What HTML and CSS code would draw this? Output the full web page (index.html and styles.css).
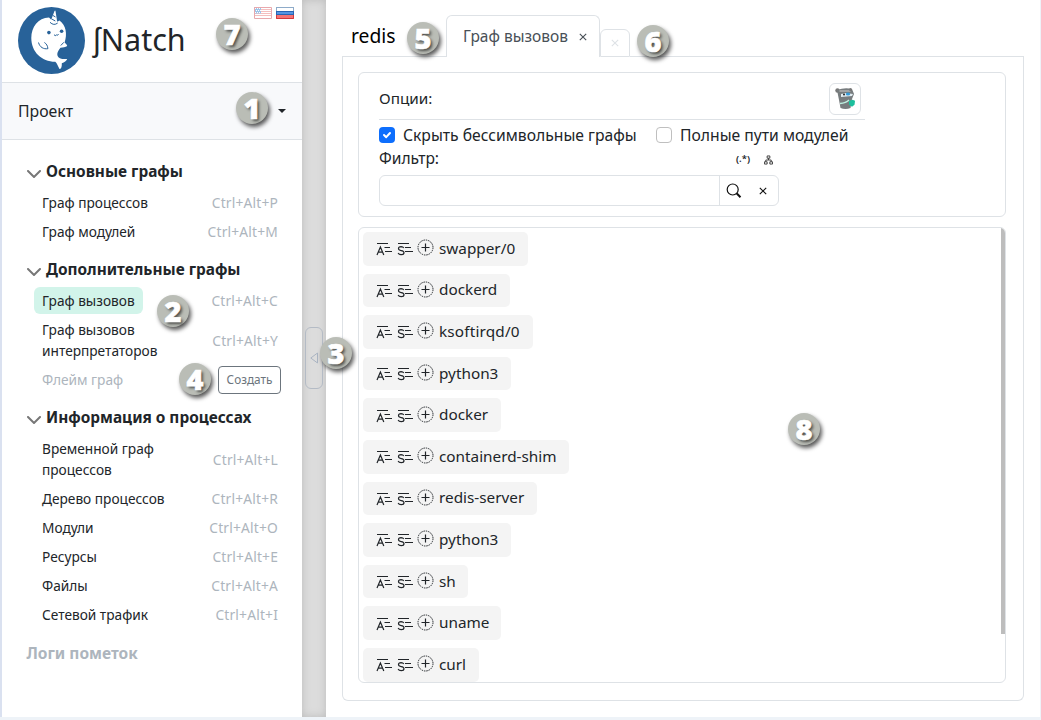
FILE: index.html
```html
<!DOCTYPE html>
<html lang="ru">
<head>
<meta charset="utf-8">
<title>Natch</title>
<link rel="stylesheet" href="styles.css">
</head>
<body>
<svg class="defs" width="0" height="0">
  <symbol id="chev" viewBox="0 0 14 8"><path d="M1 1l6 6 6-6" fill="none" stroke="#777" stroke-width="2" stroke-linecap="round"/></symbol>
  <symbol id="asm" viewBox="0 0 16 14"><path d="M1 1.500h11M8.500 5.500h5.500M9 9.500h7M1 13l3.400-8L7.800 13M2.200 10.200h4.400" fill="none" stroke="#212529" stroke-width="1.200"/></symbol>
  <symbol id="src" viewBox="0 0 16 14"><path d="M1 1.500h11M8 5.500h6M8 9.500h8M6.800 6Q6 4.600 4.100 4.600 1.500 4.700 1.500 6.500 1.500 8.200 4.200 8.600 7 9 7 10.800 7 12.700 4.200 12.700 1.900 12.700 1.100 11" fill="none" stroke="#212529" stroke-width="1.200"/></symbol>
  <symbol id="plus" viewBox="0 0 17 17"><circle cx="8.500" cy="8.500" r="7.500" fill="none" stroke="#212529" stroke-width="1" stroke-dasharray="1.500 .86"/><path d="M8.500 4.500v8M4.500 8.500h8" stroke="#212529" stroke-width="1.200"/></symbol>
</svg>
<div class="app">
  <aside class="sidebar">
    <header class="brand">
      <svg class="logo" viewBox="0 0 67 67">
        <circle cx="33.500" cy="33.500" r="33.500" fill="#286299"/>
        <path d="M32 16L36.500 4q.6-1 1 0L39.500 17q-3.500 2.500-7.500-1z" fill="#fff"/>
        <path d="M31 10.500C20 11 13.300 20 13.300 31c0 14 10.200 23.500 24 23.800 1.700 1.400 2.500 4.200 4.200 7.200 1.700.4 2.500-2.300 2.300-5.700 2.500-1 4.800-2.500 5.400-4.300-3.200.1-6.200.5-8.500-1.500-2.300-2.400-1.700-5.700 1.800-9.800 2.500-.3 5-.6 6.700-1.700-.4-1.500-1.700-2.500-2.600-3.400C49.500 27 48 18 41.500 13.500q-5 3.500-10.500-3z" fill="#fff"/>
        <circle cx="30.900" cy="25.600" r="1.800" fill="#286299"/><circle cx="43.600" cy="24.200" r="1.800" fill="#286299"/>
        <path d="M36 27.700q1.200 1.800 2.500.2 1.500.9 2-.7M20.500 35.500c1.300 4.800 5 6.800 9.400 6.200-.2-2.900-1.500-5-3.500-6.200M42.800 38.500l3-3.200M32 15.300q3.800 3.800 7.700.7M35 8.500l2.500 1.500M33.800 12l3.500 2" fill="none" stroke="#286299" stroke-width="1"/>
      </svg>
      <span class="brand-name">ʃNatch</span>
      <span class="flags">
        <svg class="flag us" viewBox="0 0 18 12"><path fill="#fff" d="M0 0h18v12H0z"/><path d="M0 2.500h18M0 4.500h18M0 6.500h18M0 8.500h18" stroke="#f3b5b5"/><path fill="#8fbce6" d="M0 0h7v6.500H0z"/><path d="M1 1.500h6M2 3.500h6M1 5.500h6" stroke="#fff" stroke-dasharray="1 1"/><path fill="none" stroke="#e59a9f" d="M.5.5h17v11H.5z"/></svg>
        <svg class="flag" viewBox="0 0 18 12"><path fill="#fff" d="M0 0h18v4H0z"/><path fill="#5495e2" d="M0 4h18v4H0z"/><path fill="#f47373" d="M0 8h18v4H0z"/><path d="M.5 0v4M17.500 0v4M0 .5h18" stroke="#8eabc9"/><path d="M0 4.500h18M0 7.500h18M.5 4v4M17.500 4v4" stroke="#2865b5"/><path d="M.5 8v3.500h17V8" fill="none" stroke="#d3393d"/></svg>
      </span>
    </header>
    <div class="project"><span>Проект</span><i class="caret"></i></div>
    <nav class="menu">
      <h2><svg class="chev"><use href="#chev"/></svg><span>Основные графы</span></h2>
      <div class="item"><a>Граф процессов</a><kbd>Ctrl+Alt+P</kbd></div>
      <div class="item"><a>Граф модулей</a><kbd>Ctrl+Alt+M</kbd></div>
      <h2><svg class="chev"><use href="#chev"/></svg><span>Дополнительные графы</span></h2>
      <div class="item"><a class="active">Граф вызовов</a><kbd>Ctrl+Alt+C</kbd></div>
      <div class="item"><a>Граф вызовов<br>интерпретаторов</a><kbd>Ctrl+Alt+Y</kbd></div>
      <div class="item off"><a>Флейм граф</a><button class="create">Создать</button></div>
      <h2><svg class="chev"><use href="#chev"/></svg><span>Информация о процессах</span></h2>
      <div class="item"><a>Временной граф<br>процессов</a><kbd>Ctrl+Alt+L</kbd></div>
      <div class="item"><a>Дерево процессов</a><kbd>Ctrl+Alt+R</kbd></div>
      <div class="item"><a>Модули</a><kbd>Ctrl+Alt+O</kbd></div>
      <div class="item"><a>Ресурсы</a><kbd>Ctrl+Alt+E</kbd></div>
      <div class="item"><a>Файлы</a><kbd>Ctrl+Alt+A</kbd></div>
      <div class="item"><a>Сетевой трафик</a><kbd>Ctrl+Alt+I</kbd></div>
      <h2 class="off"><span>Логи пометок</span></h2>
    </nav>
  </aside>
  <div class="splitter"><button class="collapse"><svg width="9" height="12" viewBox="0 0 9 12"><path d="M7.500 1v10L.8 6z" fill="none" stroke="#aab4c2"/></svg></button></div>
  <main class="main">
    <div class="tabs">
      <div class="redis">redis</div>
      <div class="tab"><span>Граф вызовов</span><svg class="x" viewBox="0 0 8 8"><path d="M.8.8l6.400 6.400M7.200.8L.8 7.200"/></svg></div>
      <div class="tab-mini"><svg class="x" viewBox="0 0 8 8"><path d="M.8.8l6.400 6.400M7.200.8L.8 7.200"/></svg></div>
      <div class="tab-rest"></div>
    </div>
    <div class="panel">
      <section class="options">
        <div class="opt-head"><span>Опции:</span>
          <button class="mascot"><svg width="22" height="24" viewBox="0 0 22 24"><circle cx="3.500" cy="3.500" r="2.200" fill="#777"/><path d="M3 3q8-3 15-1l2 5-2 5-1.500 9q-5 2-10 0L5 13z" fill="#777c7e"/><path d="M5.500 4h11" stroke="#a2a4a5" stroke-width="2"/><circle cx="16.500" cy="2.500" r="1.500" fill="#777"/><path d="M7 7l5-1 7 1-1 2-11 1z" fill="#e2edf2"/><ellipse cx="14" cy="7" rx="2.200" ry="1.500" fill="#359bd8"/><circle cx="10" cy="7.500" r="1" fill="#222"/><path d="M6 16.500q6-.5 9-3.500" fill="none" stroke="#bdeee0" stroke-width="1.300"/><path d="M15 14l3.500-1.200 2.500 1-.5 4-2.500 2-3-2z" fill="#1dbf9d"/></svg></button>
        </div>
        <div class="checks">
          <span class="box on"><svg viewBox="0 0 16 16"><path d="M5 8l2.200 2.200L11 6" fill="none" stroke="#fff" stroke-width="2" stroke-linecap="round" stroke-linejoin="round"/></svg></span><span class="c1">Скрыть бессимвольные графы</span>
          <span class="box"></span><span class="c2">Полные пути модулей</span>
        </div>
        <div class="filter-head"><span class="flabel">Фильтр:</span><span class="regex">(.*)</span>
          <svg class="tree" viewBox="0 0 10 10"><path d="M3.500.5h3v2.500h-3zM5 3v2M2 7V5h6v2M.5 7h3v2.500h-3zM6.500 7h3v2.500h-3z" fill="none" stroke="#333"/></svg></div>
        <div class="search"><div class="field"></div>
          <svg class="lens" viewBox="0 0 16 16"><circle cx="6.700" cy="6.500" r="5.500" fill="none" stroke="#111" stroke-width="1.200"/><path d="M10.800 10.500l3.700 3.700" stroke="#111" stroke-width="2"/></svg>
          <svg class="x dark" viewBox="0 0 8 8"><path d="M.8.8l6.400 6.400M7.200.8L.8 7.200"/></svg></div>
      </section>
      <section class="list">
        <div class="rows">
          <div class="chip"><svg class="ln"><use href="#asm"/></svg><svg class="ln"><use href="#src"/></svg><svg class="pl"><use href="#plus"/></svg><span>swapper/0</span></div>
          <div class="chip"><svg class="ln"><use href="#asm"/></svg><svg class="ln"><use href="#src"/></svg><svg class="pl"><use href="#plus"/></svg><span>dockerd</span></div>
          <div class="chip wide"><svg class="ln"><use href="#asm"/></svg><svg class="ln"><use href="#src"/></svg><svg class="pl"><use href="#plus"/></svg><span>ksoftirqd/0</span></div>
          <div class="chip"><svg class="ln"><use href="#asm"/></svg><svg class="ln"><use href="#src"/></svg><svg class="pl"><use href="#plus"/></svg><span>python3</span></div>
          <div class="chip"><svg class="ln"><use href="#asm"/></svg><svg class="ln"><use href="#src"/></svg><svg class="pl"><use href="#plus"/></svg><span>docker</span></div>
          <div class="chip tight"><svg class="ln"><use href="#asm"/></svg><svg class="ln"><use href="#src"/></svg><svg class="pl"><use href="#plus"/></svg><span>containerd-shim</span></div>
          <div class="chip"><svg class="ln"><use href="#asm"/></svg><svg class="ln"><use href="#src"/></svg><svg class="pl"><use href="#plus"/></svg><span>redis-server</span></div>
          <div class="chip"><svg class="ln"><use href="#asm"/></svg><svg class="ln"><use href="#src"/></svg><svg class="pl"><use href="#plus"/></svg><span>python3</span></div>
          <div class="chip tight"><svg class="ln"><use href="#asm"/></svg><svg class="ln"><use href="#src"/></svg><svg class="pl"><use href="#plus"/></svg><span>sh</span></div>
          <div class="chip tight"><svg class="ln"><use href="#asm"/></svg><svg class="ln"><use href="#src"/></svg><svg class="pl"><use href="#plus"/></svg><span>uname</span></div>
          <div class="chip"><svg class="ln"><use href="#asm"/></svg><svg class="ln"><use href="#src"/></svg><svg class="pl"><use href="#plus"/></svg><span>curl</span></div>
        </div>
        <div class="thumb"></div>
      </section>
    </div>
  </main>
</div>
<b class="mark m1">1</b><b class="mark m2">2</b><b class="mark m3">3</b><b class="mark m4">4</b>
<b class="mark m5">5</b><b class="mark m6">6</b><b class="mark m7">7</b><b class="mark m8">8</b>
</body>
</html>
```
FILE: styles.css
```css
* { box-sizing: border-box; }
body { margin: 0; width: 1041px; height: 720px; overflow: hidden; position: relative; background: #eef3f8; font: 15.3px/24px "Noto Sans", sans-serif; color: #212529; white-space: nowrap; }
svg { display: block; flex: none; }
.defs { position: absolute; }
button { font: inherit; padding: 0; background: none; }
.app { display: flex; height: 717px; border-left: 2px solid #dae1f0; border-right: 1px solid #eef2f8; background: #fff; }
.sidebar { width: 300px; flex: none; }
.brand { height: 83px; border-bottom: 1px solid #dee2e6; display: flex; align-items: flex-start; padding: 7px 8px 0 16px; }
.logo { width: 67px; height: 67px; }
.brand-name { font-size: 30.5px; line-height: 40px; margin: 12px 0 0 8px; }
.flags { display: flex; gap: 4px; margin-left: auto; }
.flag { width: 18px; height: 12px; }
.us { opacity: .85; }
.project { height: 57px; background: #f8f9fb; border-bottom: 1px solid #dee2e6; display: flex; align-items: center; justify-content: space-between; padding: 0 16px; }
.project span { font-size: 15.8px; }
.caret { border: 4.500px solid transparent; border-top-color: #212529; border-bottom: 0; }
.menu { padding: 8px 24px 0; }
.menu h2 { margin: 0; height: 40px; padding-top: 12px; display: flex; align-items: flex-start; gap: 5px; font-size: 15.4px; line-height: 24px; font-weight: 700; }
.menu h2.off { font-size: 15.5px; padding-left: .5px; }
.chev { width: 14px; height: 8px; margin: 10px 0 0 1px; }
.item { min-height: 29px; display: flex; align-items: center; justify-content: space-between; font-size: 13.7px; line-height: 21px; }
.item a { margin: 1px 0 1px 8px; padding: 3px 8px; border-radius: 6px; }
.item .active { background: #d2f4ea; }
.item kbd { font: inherit; font-size: 13.8px; letter-spacing: .18px; color: #adb5bd; }
.off, .menu h2.off { color: #adb5bd; }
.off a { color: #adb5bd; }
.create { width: 63px; height: 28px; margin: 0 -3px 0 0; border: 1px solid #6c757d; border-radius: 4px; color: #6c757d; font-size: 11.8px; }
.splitter { width: 24px; flex: none; background: #dcdcdc; box-shadow: inset 0 0 8px #bbb; padding: 327px 0 0 3px; }
.collapse { width: 18px; height: 62px; border: 1px solid #b4bbc5; border-radius: 6px; display: grid; place-items: center; }
.main { flex: 1; padding: 15px 16px 16px; display: flex; flex-direction: column; }
.tabs { display: flex; align-items: flex-end; height: 42px; }
.redis { width: 104px; height: 42px; border-bottom: 1px solid #dee2e6; padding: 9px 0 0 9px; font-size: 19.3px; color: #000; }
.tab { width: 154px; height: 42px; border: 1px solid #dee2e6; border-bottom: 0; border-radius: 6px 6px 0 0; display: flex; align-items: center; gap: 11px; padding: 0 0 1px 16px; color: #495057; font-size: 15.5px; }
.x { width: 8px; height: 8px; fill: none; stroke: #495057; stroke-width: 1.100; }
.tab .x { margin-top: 2px; }
.dark { stroke: #111; }
.tab-mini { width: 30px; height: 28px; border: 1px solid #dee2e6; border-radius: 6px 6px 0 0; display: grid; place-items: center; }
.tab-mini .x { stroke: #dee2e6; }
.tab-rest { flex: 1; border-bottom: 1px solid #dee2e6; }
.panel { flex: 1; border: 1px solid #dee2e6; border-top: 0; border-radius: 0 0 6px 6px; padding: 15px 17px 17px 15px; display: flex; flex-direction: column; gap: 10px; }
.options { height: 145px; border: 1px solid #dee2e6; border-radius: 6px; padding: 10px 20px 0; }
.opt-head { width: 486px; height: 37px; border-bottom: 1px solid #dee2e6; display: flex; justify-content: space-between; align-items: flex-start; padding-right: 4px; }
.opt-head span { margin-top: 3px; }
.mascot { width: 32px; height: 32px; border: 1px solid #dee2e6; border-radius: 6px; display: grid; place-items: center; }
.checks { display: flex; align-items: center; height: 30px; gap: 8px; }
.box { width: 16px; height: 16px; border: 1px solid #bfbfbf; border-radius: 4px; }
.box.on { background: #0d6efd; border: 0; }
.c1 { width: 245px; font-size: 15.7px; }
.c2 { font-size: 15.7px; }
.filter-head { height: 24px; margin-top: -4px; display: flex; align-items: center; }
.flabel { width: 357px; font-size: 15.6px; }
.regex { font-size: 9.500px; font-weight: 600; width: 28px; padding-top: 2px; }
.tree { width: 9px; height: 10px; margin-top: 3px; }
.search { width: 400px; height: 31px; margin-top: 5px; border: 1px solid #dee2e6; border-radius: 6px; display: flex; align-items: center; }
.field { width: 340px; height: 29px; border-right: 1px solid #dee2e6; }
.lens { width: 16px; height: 16px; margin: 0 17px 0 6px; }
.list { flex: 1; border: 1px solid #dee2e6; border-radius: 6px; display: flex; justify-content: space-between; padding-left: 4px; overflow: hidden; }
.rows { display: flex; flex-direction: column; align-items: flex-start; gap: 8px; padding-top: 4px; }
.chip { height: 33.600px; flex: none; background: #f4f4f4; border-radius: 5px; display: flex; align-items: center; padding: 0 13px 2px; }
.wide { letter-spacing: .18px; }
.tight { padding-right: 12px; }
.ln { width: 16px; height: 14px; margin: 3px 5px 0 0; }
.pl { width: 17px; height: 17px; margin-right: 5px; margin-left: -1px; }
.thumb { width: 4px; height: 406px; background: #bdbdbd; }
.mark { position: absolute; width: 32px; height: 32px; border-radius: 50%; background: #babdb6; color: #fff; font: 800 29px/32px "Open Sans", sans-serif; text-align: center; box-shadow: 2px 3px 4px rgba(0,0,0,.65); text-shadow: 2px 2px 3px rgba(0,0,0,.6); -webkit-text-stroke: .6px #fff; }
.m1 { left: 236px; top: 92px; } .m2 { left: 157px; top: 295px; } .m3 { left: 320px; top: 337px; } .m4 { left: 179px; top: 363px; }
.m5 { left: 407px; top: 22px; } .m6 { left: 637px; top: 25px; } .m7 { left: 216px; top: 18px; } .m8 { left: 788px; top: 413px; }
```
